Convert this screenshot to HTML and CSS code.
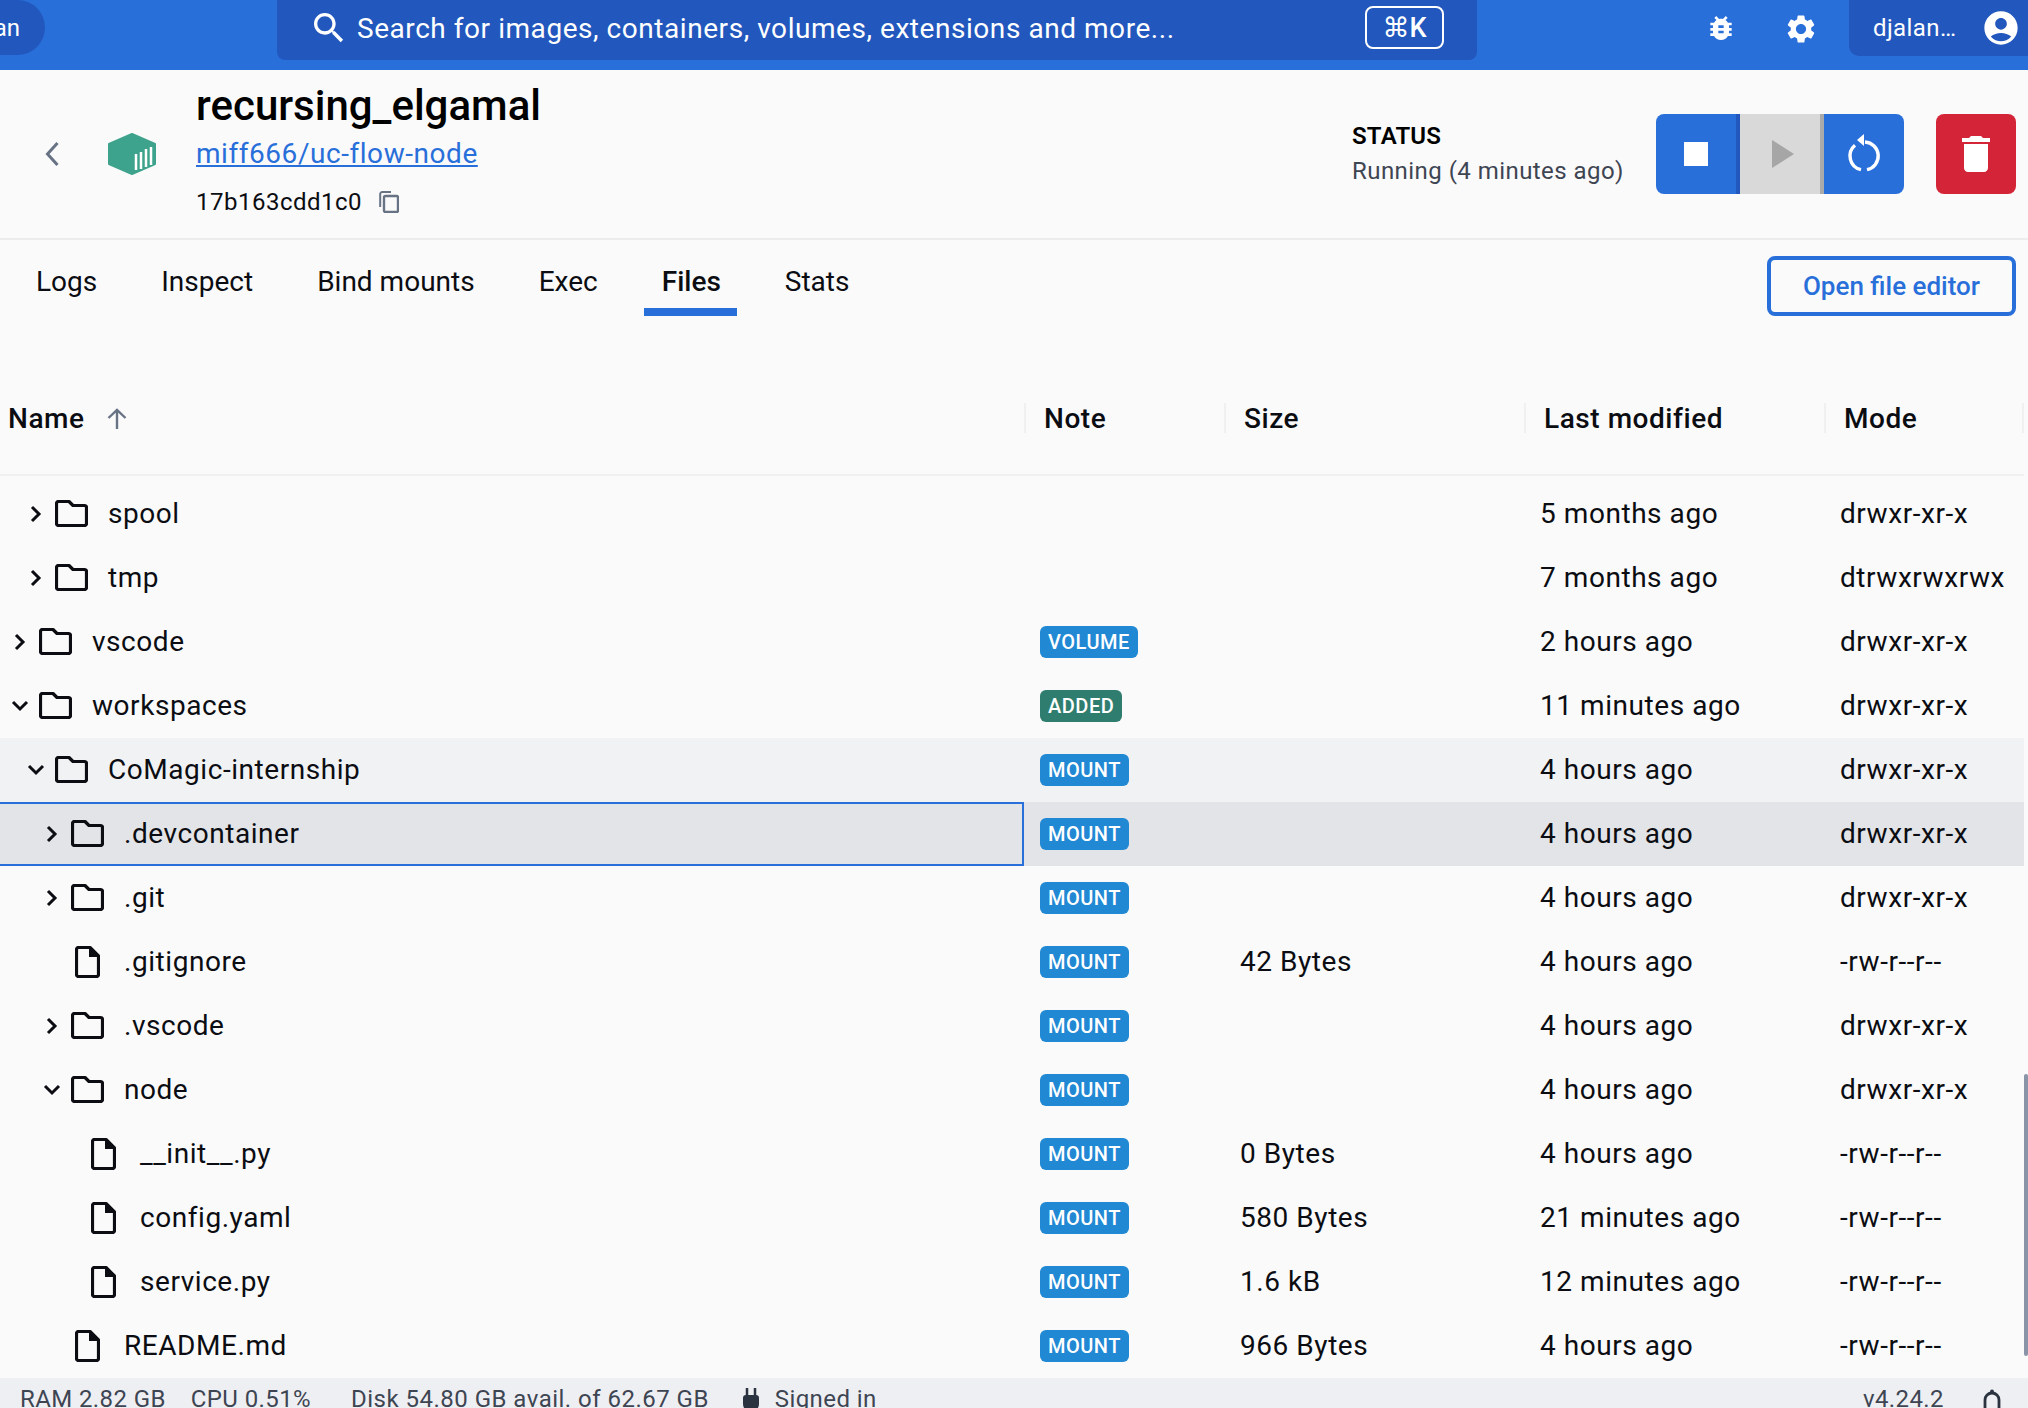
FILE: index.html
```html
<!DOCTYPE html>
<html lang="en">
<head>
    <meta charset="UTF-8">
    <title>recursing_elgamal - Files</title>
    <link rel="stylesheet" href="styles.css">
</head>
<body>
    <svg class="defs">
        <symbol id="i-folder" viewBox="0 0 33 27"><path d="M3.500 1.500H14L18 5.500H29.500a2 2 0 0 1 2 2V23.500a2 2 0 0 1-2 2H3.500a2 2 0 0 1-2-2V3.500a2 2 0 0 1 2-2z" fill="none" stroke="#0b0d12" stroke-width="3.200" stroke-linejoin="round"/></symbol>
        <symbol id="i-file" viewBox="0 0 25 32"><path d="M3.500 1.500H15L23.500 10V28.500a2 2 0 0 1-2 2H3.500a2 2 0 0 1-2-2V3.500a2 2 0 0 1 2-2z" fill="none" stroke="#0b0d12" stroke-width="3.200" stroke-linejoin="round"/><path d="M14 1.500H16L23.500 9V11H14z" fill="#0b0d12"/></symbol>
        <symbol id="i-right" viewBox="0 0 24 24"><path d="M8 5l7 7-7 7" fill="none" stroke="#0b0d12" stroke-width="3"/></symbol>
        <symbol id="i-down" viewBox="0 0 24 24"><path d="M5 8l7 7 7-7" fill="none" stroke="#0b0d12" stroke-width="3"/></symbol>
    </svg>

    <header class="topbar">
        <div class="org-pill"><span>an</span></div>
        <div class="search">
            <svg class="search-icon" viewBox="0 0 24 24"><path d="M15.500 14h-.79l-.28-.27C15.410 12.590 16 11.110 16 9.500 16 5.910 13.090 3 9.500 3S3 5.910 3 9.500 5.910 16 9.500 16c1.610 0 3.090-.59 4.230-1.570l.27.28v.79l5 4.990L20.490 19l-4.990-5zm-6 0C7.010 14 5 11.990 5 9.500S7.010 5 9.500 5 14 7.010 14 9.500 11.990 14 9.500 14z"/></svg>
            <span class="search-text">Search for images, containers, volumes, extensions and more...</span>
            <span class="kbd">⌘K</span>
        </div>
        <svg class="top-icon bug" viewBox="0 0 24 24"><path d="M20 8h-2.810c-.45-.78-1.070-1.450-1.820-1.960L17 4.410 15.590 3l-2.170 2.170C12.960 5.060 12.490 5 12 5c-.49 0-.96.06-1.410.17L8.410 3 7 4.410l1.620 1.630C7.880 6.550 7.260 7.220 6.810 8H4v2h2.090c-.05.33-.09.66-.09 1v1H4v2h2v1c0 .34.04.67.09 1H4v2h2.810c1.040 1.790 2.970 3 5.190 3s4.150-1.210 5.190-3H20v-2h-2.090c.05-.33.09-.66.09-1v-1h2v-2h-2v-1c0-.34-.04-.67-.09-1H20V8zm-6 8h-4v-2h4v2zm0-4h-4v-2h4v2z"/></svg>
        <svg class="top-icon gear" viewBox="0 0 24 24"><path d="M19.140 12.940c.04-.3.06-.61.06-.94 0-.32-.02-.64-.07-.94l2.030-1.580c.18-.14.23-.41.12-.61l-1.920-3.320c-.12-.22-.37-.29-.59-.22l-2.390.96c-.5-.38-1.030-.7-1.620-.94l-.36-2.540c-.04-.24-.24-.41-.48-.41h-3.840c-.24 0-.43.17-.47.41l-.36 2.540c-.59.24-1.130.57-1.620.94l-2.390-.96c-.22-.08-.47 0-.59.22L2.740 8.870c-.12.21-.08.47.12.61l2.030 1.580c-.05.3-.09.63-.09.94s.02.64.07.94l-2.030 1.580c-.18.14-.23.41-.12.61l1.920 3.320c.12.22.37.29.59.22l2.390-.96c.5.38 1.030.7 1.620.94l.36 2.540c.05.24.24.41.48.41h3.840c.24 0 .44-.17.47-.41l.36-2.540c.59-.24 1.130-.56 1.620-.94l2.390.96c.22.08.47 0 .59-.22l1.920-3.320c.12-.22.07-.47-.12-.61l-2.010-1.580zM12 15.600c-1.980 0-3.600-1.620-3.600-3.600s1.620-3.600 3.600-3.600 3.600 1.620 3.600 3.600-1.620 3.600-3.600 3.600z"/></svg>
        <div class="user-pill">
            <span>djalan…</span>
            <svg class="avatar" viewBox="0 0 24 24"><path d="M12 2C6.480 2 2 6.480 2 12s4.480 10 10 10 10-4.480 10-10S17.520 2 12 2zm0 4c1.930 0 3.500 1.570 3.500 3.500S13.930 13 12 13s-3.500-1.570-3.500-3.500S10.070 6 12 6zm0 14c-2.030 0-4.430-.82-6.140-2.880C7.550 15.800 9.680 15 12 15s4.450.8 6.140 2.120C16.430 19.180 14.030 20 12 20z"/></svg>
        </div>
    </header>

    <section class="container-head">
        <svg class="back" viewBox="0 0 16 32"><path d="M13.500 5L3.500 16l10 11" fill="none" stroke="#677285" stroke-width="3"/></svg>
        <svg class="cube" viewBox="0 0 48 42">
            <path d="M24 1L47 11V31L24 41L1 31V11z" fill="#3ea38c" stroke="#3ea38c" stroke-width="2" stroke-linejoin="round"/>
            <path d="M28 37V21M33 36V19M38 34V16M43 32V14" stroke="#fff" stroke-width="2.500" fill="none"/>
        </svg>
        <div class="title-block">
            <h1>recursing_elgamal</h1>
            <a class="image-link" href="#">miff666/uc-flow-node</a>
            <div class="id-line">
                <span>17b163cdd1c0</span>
                <svg class="copy" viewBox="0 0 20 22"><path d="M1.200 16V3a2 2 0 0 1 2-2H12" fill="none" stroke="#677285" stroke-width="2"/><rect x="5" y="5" width="14" height="16" rx="1.500" fill="none" stroke="#677285" stroke-width="2.400"/></svg>
            </div>
        </div>
        <div class="status">
            <strong>STATUS</strong>
            <span>Running (4 minutes ago)</span>
        </div>
        <div class="btn-group">
            <div class="act act-stop"><span class="stop-square"></span></div>
            <div class="act act-play"><svg viewBox="0 0 22 28" class="play"><path d="M0 0L22 14L0 28z" fill="#a6a6a6"/></svg></div>
            <div class="act act-restart">
                <svg class="restart" viewBox="0 0 40 40"><path d="M21 8A14 14 0 0 1 23 35.700M17 35.700A14 14 0 0 1 11 11.300" fill="none" stroke="#fff" stroke-width="3.400"/><path d="M13 6L20 0V12z" fill="#fff"/></svg>
            </div>
        </div>
        <div class="act act-delete">
            <svg class="trash" viewBox="5 3 14 18" preserveAspectRatio="none"><path d="M6 19c0 1.100.9 2 2 2h8c1.100 0 2-.9 2-2V7H6v12zM19 4h-3.500l-1-1h-5l-1 1H5v2h14V4z" fill="#fff"/></svg>
        </div>
    </section>

    <nav class="tabs">
        <a class="tab">Logs</a>
        <a class="tab">Inspect</a>
        <a class="tab">Bind mounts</a>
        <a class="tab">Exec</a>
        <a class="tab tab-active">Files</a>
        <a class="tab">Stats</a>
        <button class="editor-btn">Open file editor</button>
    </nav>

    <main class="table-wrap">
        <div class="table">
            <div class="thead">
                <div class="th th-name">Name
                    <svg class="sort" viewBox="0 0 20 21"><path d="M10 21V2M1.500 10L10 2l8.500 8" fill="none" stroke="#677285" stroke-width="2.400"/></svg>
                </div>
                <div class="th">Note</div>
                <div class="th">Size</div>
                <div class="th">Last modified</div>
                <div class="th th-last">Mode</div>
            </div>

            <div class="tr">
                <div class="td name lvl-1"><svg class="chev"><use href="#i-right"/></svg><svg class="folder"><use href="#i-folder"/></svg><span>spool</span></div>
                <div class="td"></div><div class="td"></div><div class="td">5 months ago</div><div class="td">drwxr-xr-x</div>
            </div>
            <div class="tr">
                <div class="td name lvl-1"><svg class="chev"><use href="#i-right"/></svg><svg class="folder"><use href="#i-folder"/></svg><span>tmp</span></div>
                <div class="td"></div><div class="td"></div><div class="td">7 months ago</div><div class="td">dtrwxrwxrwx</div>
            </div>
            <div class="tr">
                <div class="td name lvl-0"><svg class="chev"><use href="#i-right"/></svg><svg class="folder"><use href="#i-folder"/></svg><span>vscode</span></div>
                <div class="td"><span class="badge">VOLUME</span></div><div class="td"></div><div class="td">2 hours ago</div><div class="td">drwxr-xr-x</div>
            </div>
            <div class="tr">
                <div class="td name lvl-0"><svg class="chev"><use href="#i-down"/></svg><svg class="folder"><use href="#i-folder"/></svg><span>workspaces</span></div>
                <div class="td"><span class="badge badge-added">ADDED</span></div><div class="td"></div><div class="td">11 minutes ago</div><div class="td">drwxr-xr-x</div>
            </div>
            <div class="tr tr-hover">
                <div class="td name lvl-1"><svg class="chev"><use href="#i-down"/></svg><svg class="folder"><use href="#i-folder"/></svg><span>CoMagic-internship</span></div>
                <div class="td"><span class="badge">MOUNT</span></div><div class="td"></div><div class="td">4 hours ago</div><div class="td">drwxr-xr-x</div>
            </div>
            <div class="tr tr-selected">
                <div class="td name lvl-2 focused"><svg class="chev"><use href="#i-right"/></svg><svg class="folder"><use href="#i-folder"/></svg><span>.devcontainer</span></div>
                <div class="td"><span class="badge">MOUNT</span></div><div class="td"></div><div class="td">4 hours ago</div><div class="td">drwxr-xr-x</div>
            </div>
            <div class="tr">
                <div class="td name lvl-2"><svg class="chev"><use href="#i-right"/></svg><svg class="folder"><use href="#i-folder"/></svg><span>.git</span></div>
                <div class="td"><span class="badge">MOUNT</span></div><div class="td"></div><div class="td">4 hours ago</div><div class="td">drwxr-xr-x</div>
            </div>
            <div class="tr">
                <div class="td name lvl-2"><span class="chev"></span><svg class="file"><use href="#i-file"/></svg><span>.gitignore</span></div>
                <div class="td"><span class="badge">MOUNT</span></div><div class="td">42 Bytes</div><div class="td">4 hours ago</div><div class="td">-rw-r--r--</div>
            </div>
            <div class="tr">
                <div class="td name lvl-2"><svg class="chev"><use href="#i-right"/></svg><svg class="folder"><use href="#i-folder"/></svg><span>.vscode</span></div>
                <div class="td"><span class="badge">MOUNT</span></div><div class="td"></div><div class="td">4 hours ago</div><div class="td">drwxr-xr-x</div>
            </div>
            <div class="tr">
                <div class="td name lvl-2"><svg class="chev"><use href="#i-down"/></svg><svg class="folder"><use href="#i-folder"/></svg><span>node</span></div>
                <div class="td"><span class="badge">MOUNT</span></div><div class="td"></div><div class="td">4 hours ago</div><div class="td">drwxr-xr-x</div>
            </div>
            <div class="tr">
                <div class="td name lvl-3"><span class="chev"></span><svg class="file"><use href="#i-file"/></svg><span>__init__.py</span></div>
                <div class="td"><span class="badge">MOUNT</span></div><div class="td">0 Bytes</div><div class="td">4 hours ago</div><div class="td">-rw-r--r--</div>
            </div>
            <div class="tr">
                <div class="td name lvl-3"><span class="chev"></span><svg class="file"><use href="#i-file"/></svg><span>config.yaml</span></div>
                <div class="td"><span class="badge">MOUNT</span></div><div class="td">580 Bytes</div><div class="td">21 minutes ago</div><div class="td">-rw-r--r--</div>
            </div>
            <div class="tr">
                <div class="td name lvl-3"><span class="chev"></span><svg class="file"><use href="#i-file"/></svg><span>service.py</span></div>
                <div class="td"><span class="badge">MOUNT</span></div><div class="td">1.6 kB</div><div class="td">12 minutes ago</div><div class="td">-rw-r--r--</div>
            </div>
            <div class="tr">
                <div class="td name lvl-2"><span class="chev"></span><svg class="file"><use href="#i-file"/></svg><span>README.md</span></div>
                <div class="td"><span class="badge">MOUNT</span></div><div class="td">966 Bytes</div><div class="td">4 hours ago</div><div class="td">-rw-r--r--</div>
            </div>
        </div>
        <div class="scrollbar"></div>
    </main>

    <footer class="statusbar">
        <span class="stat-ram">RAM 2.82 GB</span>
        <span class="stat-cpu">CPU 0.51%</span>
        <span class="stat-disk">Disk 54.80 GB avail. of 62.67 GB</span>
        <svg class="plug" viewBox="0 0 20 30"><path d="M6 0V8M14 0V8" stroke="#2c3340" stroke-width="2.500"/><path d="M2 10a3 3 0 0 1 3-3H15a3 3 0 0 1 3 3V16a8 8 0 0 1-16 0z" fill="#2c3340"/></svg>
        <span class="stat-sign">Signed in</span>
        <span class="version">v4.24.2</span>
        <svg class="bell" viewBox="0 0 20 30"><path d="M3 28V12a7 7 0 0 1 14 0V28" fill="none" stroke="#2c3340" stroke-width="2.800"/><circle cx="10" cy="3.500" r="2" fill="#2c3340"/></svg>
    </footer>
</body>
</html>
```
FILE: styles.css
```css
* {
    box-sizing: border-box;
}

html, body {
    margin: 0;
    padding: 0;
    height: 1408px;
    overflow: hidden;
}

body {
    display: flex;
    flex-direction: column;
    background-color: #fafafa;
    color: #0b0d12;
    font-family: Roboto, "Liberation Sans", sans-serif;
    font-size: 28px;
}

.defs {
    display: none;
}

/* top bar */
.topbar {
    display: flex;
    align-items: flex-start;
    flex: none;
    height: 70px;
    background-color: #296fda;
    color: #fff;
}

.org-pill {
    display: flex;
    align-items: center;
    justify-content: flex-end;
    flex: none;
    width: 45px;
    height: 55px;
    padding-right: 25px;
    font-size: 24px;
    overflow: hidden;
    background-color: #2257bd;
    border-radius: 0 28px 28px 0;
}

.search {
    display: flex;
    align-items: center;
    width: 1200px;
    height: 60px;
    margin-left: 232px;
    padding-left: 32px;
    background-color: #2257bd;
    border-radius: 0 0 8px 8px;
}

.search-icon {
    flex: none;
    width: 40px;
    height: 40px;
    margin-top: -4px;
    fill: #fff;
}

.search-text {
    width: 1008px;
    margin-left: 8px;
    margin-top: -4px;
    font-size: 28px;
    letter-spacing: 0.55px;
    white-space: nowrap;
}

.kbd {
    display: flex;
    align-items: center;
    justify-content: center;
    width: 79px;
    height: 43px;
    margin-top: -5px;
    border: 2px solid #fff;
    border-radius: 8px;
    font-size: 27px;
    font-weight: 500;
    font-family: Roboto, "DejaVu Sans", sans-serif;
}

.top-icon {
    width: 32px;
    height: 32px;
    margin-top: 12px;
    fill: #fff;
}

.bug {
    margin-left: 228px;
}

.gear {
    width: 34px;
    height: 34px;
    margin-left: 47px;
}

.user-pill {
    display: flex;
    align-items: center;
    width: 179px;
    height: 56px;
    margin-left: 31px;
    padding-left: 24px;
    background-color: #2257bd;
    border-radius: 0 0 0 10px;
    font-size: 24px;
    letter-spacing: 0.4px;
}

.avatar {
    width: 40px;
    height: 40px;
    margin-left: auto;
    margin-right: 7px;
    fill: #fff;
}

/* container header */
.container-head {
    display: flex;
    align-items: center;
    flex: none;
    height: 170px;
    padding-left: 44px;
    border-bottom: 2px solid #ececec;
}

.back {
    width: 16px;
    height: 32px;
}

.cube {
    width: 48px;
    height: 42px;
    margin-left: 48px;
}

.title-block {
    width: 1156px;
    margin-left: 40px;
    margin-top: -7px;
}

h1 {
    margin: 0;
    font-size: 42px;
    line-height: 52px;
    font-weight: 500;
    color: #000;
}

.image-link {
    display: block;
    margin-top: 2px;
    font-size: 28px;
    line-height: 40px;
    letter-spacing: 0.55px;
    color: #296fda;
    text-decoration: underline;
}

.id-line {
    display: flex;
    align-items: center;
    margin-top: 8px;
    height: 40px;
    font-size: 24px;
    letter-spacing: 0.5px;
}

.copy {
    width: 20px;
    height: 22px;
    margin-left: 17px;
}

.status {
    display: flex;
    flex-direction: column;
    width: 304px;
    font-size: 24px;
    line-height: 35px;
    letter-spacing: 0.45px;
    color: #3e4552;
    margin-top: -1px;
}

.status strong {
    font-weight: 600;
    letter-spacing: 0.2px;
    color: #000;
}

.btn-group {
    display: flex;
    border-radius: 8px;
    overflow: hidden;
}

.act {
    display: flex;
    align-items: center;
    justify-content: center;
    width: 84px;
    height: 80px;
}

.act-stop {
    background-color: #296fda;
    border-right: 4px solid #2257bd;
}

.stop-square {
    width: 24px;
    height: 24px;
    background-color: #fff;
}

.act-play {
    background-color: #d9d9d9;
    border-right: 4px solid #aaa;
}

.play {
    width: 22px;
    height: 28px;
    margin-left: 6px;
}

.act-restart {
    width: 80px;
    background-color: #296fda;
}

.restart {
    width: 40px;
    height: 40px;
}

.act-delete {
    width: 80px;
    margin-left: 32px;
    background-color: #d42538;
    border-radius: 8px;
}

.trash {
    width: 28px;
    height: 36px;
}

/* tabs */
.tabs {
    display: flex;
    align-items: flex-end;
    flex: none;
    height: 76px;
    padding-left: 18px;
    padding-right: 12px;
}

.tab {
    height: 60px;
    padding: 6px 18px 0;
    margin-right: 28px;
    line-height: 40px;
    font-size: 28px;
}

.tab-active {
    padding-right: 16px;
    margin-right: 30px;
    font-weight: 500;
    border-bottom: 8px solid #296fda;
}

.editor-btn {
    width: 249px;
    height: 60px;
    margin-left: auto;
    padding: 0;
    background: transparent;
    border: 4px solid #296fda;
    border-radius: 8px;
    color: #296fda;
    font-family: inherit;
    font-size: 26px;
    font-weight: 500;
}

/* file table */
.table-wrap {
    position: relative;
    flex: 1;
    overflow: hidden;
}

.table {
    width: 2024px;
}

.thead, .tr {
    display: grid;
    grid-template-columns: 1024px 200px 300px 300px 200px;
}

.thead {
    align-items: center;
    height: 160px;
    margin-bottom: 6px;
    padding-top: 86px;
    padding-bottom: 40px;
    border-bottom: 2px solid #f0f0f0;
}

.th {
    display: flex;
    align-items: center;
    height: 30px;
    padding-left: 18px;
    font-weight: 500;
    font-size: 28px;
    letter-spacing: 0.55px;
    border-left: 2px solid #f0f0f0;
}

.th-name {
    padding-left: 8px;
    border-left: none;
}

.th-last {
    border-right: 2px solid #f0f0f0;
}

.sort {
    width: 20px;
    height: 21px;
    margin-left: 22px;
}

.tr {
    height: 64px;
}

.td {
    display: flex;
    align-items: center;
    padding-left: 16px;
    padding-bottom: 1px;
    letter-spacing: 0.55px;
    white-space: nowrap;
}

.tr-hover {
    background-color: #f1f2f4;
}

.tr-selected {
    background-color: #e3e4e8;
}

.focused {
    border: 2px solid #296fda;
    border-left: none;
}

.name.lvl-0 { padding-left: 8px; }
.name.lvl-1 { padding-left: 24px; }
.name.lvl-2 { padding-left: 40px; }
.name.lvl-3 { padding-left: 56px; }

.chev {
    flex: none;
    width: 24px;
    height: 24px;
}

.folder {
    flex: none;
    width: 33px;
    height: 27px;
    margin: 0 20px 0 7px;
}

.file {
    flex: none;
    width: 25px;
    height: 32px;
    margin: 0 24px 0 11px;
}

.badge {
    height: 32px;
    padding: 0 8px;
    line-height: 32px;
    border-radius: 6px;
    background-color: #2188d4;
    color: #fff;
    font-size: 20px;
    font-weight: 500;
    letter-spacing: 0.5px;
}

.badge-added {
    background-color: #2e7d6f;
}

.scrollbar {
    position: absolute;
    top: 758px;
    right: 0;
    width: 4px;
    height: 282px;
    background-color: #8a94a8;
    border-radius: 2px;
}

/* status bar */
.statusbar {
    display: flex;
    flex: none;
    height: 30px;
    padding-left: 20px;
    overflow: hidden;
    background-color: #eeeff2;
    color: #3e4552;
    font-size: 24px;
    line-height: 42px;
    letter-spacing: 0.4px;
    white-space: nowrap;
}

.stat-cpu { margin-left: 25px; }

.stat-disk {
    margin-left: 40px;
    letter-spacing: 0.48px;
}

.plug {
    flex: none;
    width: 20px;
    height: 30px;
    margin: 10px 0 0 32px;
}

.stat-sign { margin-left: 14px; }

.version {
    margin-left: auto;
}

.bell {
    flex: none;
    width: 20px;
    height: 30px;
    margin: 10px 26px 0 38px;
}
```
